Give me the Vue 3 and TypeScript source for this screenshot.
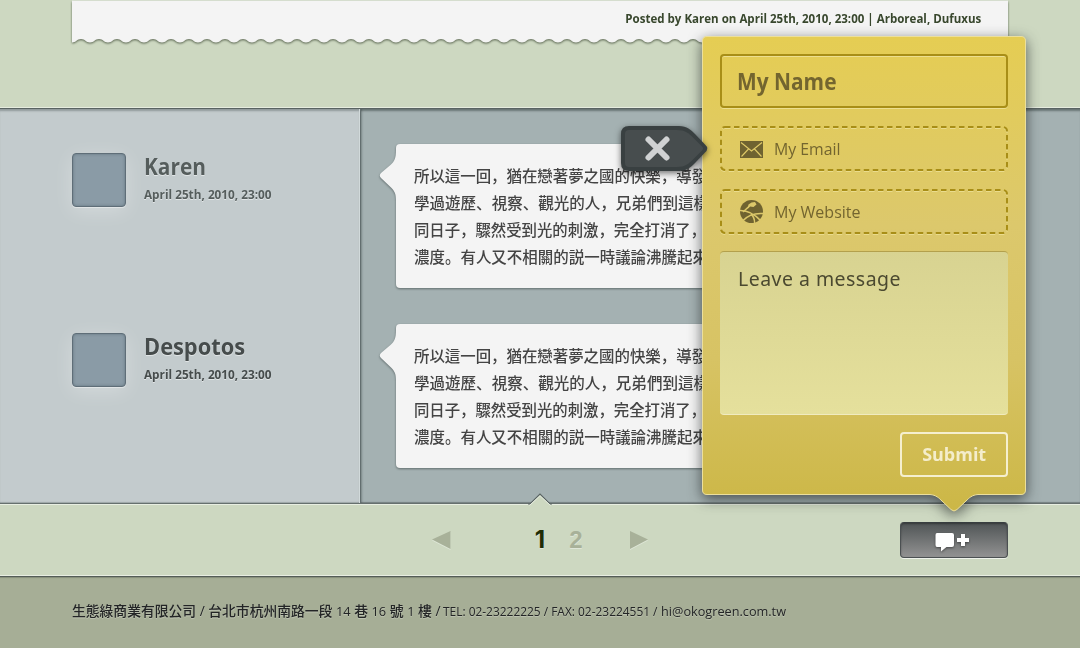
<script setup lang="ts">
import type { Directive } from 'vue'

interface Comment {
  author: string
  date: string
  recent: boolean
}

interface Line {
  text: string
  width: number
}

// Condenses a run of text horizontally so that it fills the given width.
const vFit: Directive<HTMLElement, number> = {
  mounted(el, { value }) {
    el.style.transform = `scaleX(${value / el.getBoundingClientRect().width})`
  },
}

const comments: Comment[] = [
  { author: 'Karen', date: 'April 25th, 2010, 23:00', recent: false },
  { author: 'Despotos', date: 'April 25th, 2010, 23:00', recent: true },
]

const nameWidths: Record<string, number> = { Karen: 62, Despotos: 101 }

const lines: Line[] = [
  { text: '所以這一回，猶在戀著夢之國的快樂，導發', width: 293 },
  { text: '學過遊歷、視察、觀光的人，兄弟們到這樣', width: 295 },
  { text: '同日子，驟然受到光的刺激，完全打消了，', width: 292 },
  { text: '濃度。有人又不相關的説一時議論沸騰起來', width: 294 },
]

// Scalloped lower edge of the article sheet, one scallop every 18px.
const scallops = Array.from({ length: 52 }, (_, i) => {
  const x = 936 - i * 18
  return `C${x - 4} 42.5 ${x - 5} 39 ${x - 9} 39 C${x - 13} 39 ${x - 14} 42.5 ${x - 18} 42.5`
}).join(' ')
const sheetPath = `M0 1 H936 V42.5 ${scallops} Z`
</script>

<template>
  <div class="page">
    <section class="article">
      <div class="sheet">
        <svg class="sheet-shape" width="936" height="48" viewBox="0 0 936 48">
          <path :d="sheetPath" fill="#f4f4f4" />
        </svg>
        <p class="meta"><span v-fit="356" class="fit right">Posted by Karen on April 25th, 2010, 23:00 | Arboreal, Dufuxus</span></p>
      </div>
    </section>

    <section class="comments">
      <aside class="authors">
        <div v-for="c in comments" :key="c.author" class="author" :class="{ recent: c.recent }">
          <div class="avatar"></div>
          <div class="who">
            <h3><span v-fit="nameWidths[c.author]" class="fit">{{ c.author }}</span></h3>
            <time><span v-fit="127.5" class="fit">{{ c.date }}</span></time>
          </div>
        </div>
      </aside>
      <div class="bubbles">
        <div v-for="c in comments" :key="c.author" class="bubble">
          <svg class="tail" width="18" height="50" viewBox="0 0 18 50">
            <path d="M18 0 H17 C17 8 15.5 11 12 14.5 L2 23 Q-0.4 25.5 2 28 L12 37.5 C15.5 41 17 44 17 50 H18 Z" fill="#f4f4f4" />
          </svg>
          <p v-for="l in lines" :key="l.text"><span v-fit="l.width" class="fit">{{ l.text }}</span></p>
        </div>
      </div>
    </section>

    <nav class="pager">
      <svg class="notch" width="26" height="14" viewBox="0 0 26 14">
        <path d="M2 12 L13 1.5 L24 12 V14 H2 Z" fill="#cdd8c1" />
        <path d="M1 11 L3 11 L13 1.2 L23 11 L25 11" fill="none" stroke="#596362" stroke-width="1.2" />
        <path d="M2.5 12.5 L13 2.6 L23.5 12.5" fill="none" stroke="#e8eee2" stroke-width="1" />
      </svg>
      <div class="pages">
        <svg class="arrow" width="19" height="20" viewBox="0 0 19 20">
          <path d="M0 10.5 L18.5 2 V20 Z" fill="#dfe7d8" />
          <path d="M0 9.5 L18.5 1 V19 Z" fill="#a8b199" />
        </svg>
        <span class="current">1</span>
        <span class="other">2</span>
        <svg class="arrow" width="19" height="20" viewBox="0 0 19 20">
          <path d="M19 10.5 L1 2 V20 Z" fill="#dfe7d8" />
          <path d="M19 9.5 L1 1 V19 Z" fill="#a8b199" />
        </svg>
      </div>
      <button class="add" type="button" aria-label="Add comment">
        <svg width="36" height="20" viewBox="0 0 36 20">
          <path d="M2 0 H17 Q19 0 19 2 V12 Q19 14 17 14 H11.5 L6 18.5 V14 H2 Q0.5 14 0.5 12 V2 Q0.5 0 2 0 Z" fill="#fff" />
          <path d="M26 1 h4 v4 h4 v4 h-4 v4 h-4 v-4 h-4 v-4 h4 Z" fill="#fff" />
        </svg>
      </button>
    </nav>

    <footer class="footer">
      <span><span v-fit="368.5" class="fit address">生態綠商業有限公司 / 台北市杭州南路一段 <i>14</i> 巷 <i>16</i> 號 <i>1</i> 樓 /</span></span>
      <span><span v-fit="214.5" class="fit">TEL: 02-23222225 / FAX: 02-23224551 /</span></span>
      <span><span v-fit="125" class="fit">hi@okogreen.com.tw</span></span>
    </footer>

    <form class="panel" @submit.prevent>
      <svg class="panel-shape" width="324" height="477" viewBox="0 0 324 477">
        <defs>
          <linearGradient id="gold" x1="0" y1="0" x2="0" y2="1">
            <stop offset="0" stop-color="#e5cd53" />
            <stop offset="0.4" stop-color="#dcc86c" />
            <stop offset="0.68" stop-color="#d7c364" />
            <stop offset="1" stop-color="#ccb746" />
          </linearGradient>
        </defs>
        <path
          d="M5 0.5 H319 Q323.5 0.5 323.5 5 V454 Q323.5 458.5 319 458.5 H276 C270 459 267 462 264 465 L255 473.5 Q252 476.5 249 473.5 L240 465 C237 462 234 459 228 458.5 H5 Q0.5 458.5 0.5 454 V5 Q0.5 0.5 5 0.5 Z"
          fill="url(#gold)"
          stroke="#ecdf9c"
        />
      </svg>

      <div class="field name"><span v-fit="99.5" class="fit">My Name</span></div>

      <div class="field optional">
        <svg class="dashes" width="288" height="46" viewBox="0 0 288 46">
          <rect x="1" y="2" width="286" height="43" rx="4" stroke="#eadc8e" />
          <rect x="1" y="1" width="286" height="43" rx="4" stroke="#a88e17" />
        </svg>
        <svg class="icon" width="24" height="24" viewBox="0 0 24 24">
          <rect x="0" y="4" width="23" height="17" fill="#6f6330" />
          <path d="M1 5.5 L11.5 14 L22 5.5 M1.5 19.5 L8.5 12 M21.5 19.5 L14.5 12" fill="none" stroke="#e0cb68" stroke-width="1.1" />
        </svg>
        <span v-fit="66.5" class="fit">My Email</span>
      </div>

      <div class="field optional">
        <svg class="dashes" width="288" height="46" viewBox="0 0 288 46">
          <rect x="1" y="2" width="286" height="43" rx="4" stroke="#eadc8e" />
          <rect x="1" y="1" width="286" height="43" rx="4" stroke="#a88e17" />
        </svg>
        <svg class="icon" width="24" height="24" viewBox="0 0 24 24">
          <circle cx="11.5" cy="11.5" r="11.5" fill="#6f6330" />
          <path d="M11.5 2.5 L15 2 L16.5 4.5 L13.5 7 L10 6.5 L7.5 9 L8.5 4.5 Z" fill="#dcc86a" />
          <g fill="none" stroke="#dcc86a" stroke-width="1.5">
            <path d="M-0.5 10.5 Q11 10 21 21" />
            <path d="M2.5 21 Q10 12.5 23.5 13.5" />
            <path d="M3 12 L9.5 6" />
            <path d="M11 14 Q15 18 14.5 23" />
          </g>
        </svg>
        <span v-fit="86.5" class="fit">My Website</span>
      </div>

      <div class="message"><span v-fit="163" class="fit">Leave a message</span></div>

      <button class="submit" type="submit"><span v-fit="64" class="fit centre">Submit</span></button>

      <button class="close" type="button" aria-label="Close">
        <svg width="88" height="48" viewBox="0 0 88 48">
          <path d="M8 0 H58 C66 0 70 4 74 8 L84 18.5 Q88.5 22.5 84 26.5 L74 37 C70 41 66 45 58 45 H8 Q0 45 0 37 V8 Q0 0 8 0 Z" fill="#394041" />
          <path d="M8 4 H56 C64 4 68 7.5 72 11.5 L81 20.5 Q83 22.5 81 24.5 L72 33.5 C68 37.5 64 41 56 41 H8 Q4 41 4 37 V8 Q4 4 8 4 Z" fill="#474d4e" />
          <path d="M27.5 13.5 L45.5 31.5 M45.5 13.5 L27.5 31.5" stroke="#d0d2d3" stroke-width="6" stroke-linecap="round" />
        </svg>
      </button>
    </form>
  </div>
</template>

<style>
body {
  margin: 0;
}
</style>

<style scoped>
.page {
  position: relative;
  width: 1080px;
  height: 648px;
  overflow: hidden;
  display: flex;
  flex-direction: column;
  background: #cdd8c1;
  font-family: "Open Sans", "Noto Sans", "Noto Sans CJK JP", sans-serif;
}

p,
h3 {
  margin: 0;
}

button {
  padding: 0;
  border: 0;
  background: none;
  font: inherit;
}

.fit {
  display: inline-block;
  white-space: nowrap;
  transform-origin: 0 50%;
}

.fit.right {
  transform-origin: 100% 50%;
}

.fit.centre {
  transform-origin: 50% 50%;
}

.article {
  box-sizing: border-box;
  height: 108px;
  padding: 0 72px;
  border-bottom: 1px solid #e6ecdf;
}

.sheet {
  position: relative;
  height: 44px;
  border-top: 1px solid #e1e8da;
  box-sizing: border-box;
}

.sheet-shape {
  position: absolute;
  left: 0;
  top: -1px;
  filter: drop-shadow(0 1px 1px rgba(50, 60, 40, 0.75));
}

.meta {
  position: relative;
  display: flex;
  justify-content: flex-end;
  padding: 7px 27px 0 0;
  font-size: 12px;
  font-weight: 700;
  line-height: 22px;
  color: #38472d;
}

.comments {
  height: 396px;
  box-sizing: border-box;
  display: flex;
  border-top: 1px solid #596362;
  border-bottom: 1px solid #66706e;
}

.authors {
  box-sizing: border-box;
  width: 360px;
  padding: 44px 0 0 72px;
  display: flex;
  flex-direction: column;
  gap: 126px;
  background: #c3cbcd;
  border-right: 1px solid #d2dadb;
  box-shadow: inset 0 3px 2px -1px rgba(70, 80, 80, 0.4), inset 0 -2px 1px -1px rgba(70, 80, 80, 0.3);
}

.author {
  display: flex;
  gap: 18px;
  height: 54px;
  color: #555d5c;
  text-shadow: 0 1px 0 rgba(255, 255, 255, 0.5);
}

.author.recent {
  color: #464c4c;
}

.avatar {
  box-sizing: border-box;
  width: 54px;
  height: 54px;
  border: 1px solid #5f6e78;
  border-radius: 4px;
  background: #8a9ba6;
  box-shadow: inset 0 0 3px rgba(60, 75, 85, 0.5), 0 1px 0 rgba(255, 255, 255, 0.4), 0 4px 20px rgba(255, 255, 255, 0.3);
}

.who h3 {
  font-size: 22.5px;
  font-weight: 700;
  line-height: 28px;
}

.who time {
  display: block;
  margin-top: 3px;
  font-size: 12px;
  font-weight: 700;
  line-height: 22px;
}

.bubbles {
  flex: 1;
  padding: 35px 0 0 36px;
  display: flex;
  flex-direction: column;
  gap: 36px;
  background: #a4b1b2;
  box-shadow: inset 3px 0 2px -1px rgba(60, 70, 70, 0.4), inset 1px 0 0 #7b8788, inset 0 3px 2px -1px rgba(50, 60, 60, 0.5), inset 0 -2px 1px -1px rgba(50, 60, 60, 0.4);
}

.bubble {
  position: relative;
  box-sizing: border-box;
  width: 612px;
  height: 144px;
  padding: 18px 18px 0;
  border-radius: 4px;
  background: #f4f4f4;
  filter: drop-shadow(0 1px 1px rgba(60, 70, 70, 0.65));
  font-family: "Noto Sans CJK JP", sans-serif;
  font-size: 15.4px;
  font-weight: 500;
  line-height: 27px;
  color: #444;
}

.bubble p {
  height: 27px;
}

.tail {
  position: absolute;
  left: -17px;
  top: 6px;
}

.pager {
  position: relative;
  box-sizing: border-box;
  height: 72px;
  display: flex;
  justify-content: center;
  align-items: center;
  border-top: 1px solid #e8eee2;
  border-bottom: 1px solid #e8eee2;
  background: #cdd8c1;
}

.notch {
  position: absolute;
  left: 527px;
  top: -12px;
}

.pages {
  display: grid;
  grid-template-columns: 90px 36px 36px 54px;
  align-items: center;
  font-family: "Liberation Sans", Arial, sans-serif;
  font-size: 24px;
  font-weight: 700;
  text-align: center;
  line-height: 36px;
  text-shadow: 0 1px 0 rgba(255, 255, 255, 0.4);
}

.arrow:last-child {
  justify-self: end;
}

.current {
  font-family: Inter, "Liberation Sans", sans-serif;
  color: #1f2d06;
}

.other {
  color: #a8b199;
}

.add {
  position: absolute;
  right: 72px;
  top: 17px;
  box-sizing: border-box;
  width: 108px;
  height: 36px;
  display: flex;
  align-items: center;
  justify-content: center;
  border: 1px solid #4b5052;
  border-top-color: #383e40;
  border-radius: 4px;
  background: linear-gradient(#505556, #929292);
  box-shadow: inset 0 1px 2px rgba(0, 0, 0, 0.35), 0 1px 0 #eef2ea;
}

.add svg {
  margin: 6px 3px 0 0;
  overflow: visible;
  filter: drop-shadow(0 1px 1px rgba(0, 0, 0, 0.45));
}

.footer {
  box-sizing: border-box;
  height: 72px;
  padding: 22px 72px 0;
  display: grid;
  grid-template-columns: 371px 218px 126px;
  border-top: 1px solid #545d58;
  background: #a6ae96;
  box-shadow: inset 0 2px 1px -1px rgba(60, 70, 60, 0.3);
  font-size: 13px;
  font-weight: 500;
  line-height: 24px;
  color: #232526;
  text-shadow: 0 1px 1px rgba(255, 255, 255, 0.3);
}

.address {
  font-size: 14px;
}

.address i {
  font-size: 13px;
  font-style: normal;
}

.panel {
  position: absolute;
  left: 702px;
  top: 36px;
  box-sizing: border-box;
  width: 324px;
  height: 459px;
  padding: 18px;
  display: flex;
  flex-direction: column;
}

.panel-shape {
  position: absolute;
  left: 0;
  top: 0;
  overflow: visible;
  filter: drop-shadow(0 4px 7px rgba(20, 25, 25, 0.65));
}

.field,
.message,
.submit {
  position: relative;
  box-sizing: border-box;
  flex-shrink: 0;
}

.name {
  height: 54px;
  padding-left: 15px;
  border: 2px solid #a88e17;
  border-radius: 4px;
  box-shadow: inset 0 1px 0 #eddf90, 0 1px 0 #eddf90;
  font-size: 22.5px;
  font-weight: 700;
  line-height: 51px;
  color: #73652f;
}

.optional {
  height: 45px;
  margin-top: 18px;
  padding-left: 20px;
  display: flex;
  align-items: center;
  font-size: 16.5px;
  line-height: 45px;
  color: #73652f;
}

.dashes {
  position: absolute;
  left: 0;
  top: 0;
  fill: none;
  stroke-width: 2;
  stroke-dasharray: 5.5 3.5;
}

.icon {
  margin-right: 9.5px;
  overflow: visible;
}

.message {
  height: 164px;
  margin-top: 17px;
  padding: 11px 18px;
  border-top: 1px solid #b3a04c;
  border-bottom: 1px solid #f0ebc0;
  border-radius: 4px;
  background: linear-gradient(#d8d391, #e5e09c);
  font-family: "Noto Sans", sans-serif;
  font-size: 20px;
  letter-spacing: 0.5px;
  line-height: 32px;
  color: #4b4930;
}

.submit {
  width: 108px;
  height: 45px;
  margin-top: 17px;
  align-self: flex-end;
  border: 2px solid #f5efcf;
  border-radius: 4px;
  font-size: 17.5px;
  font-weight: 700;
  line-height: 41px;
  color: #f4edcb;
}

.close {
  position: absolute;
  left: -81px;
  top: 90px;
  width: 88px;
  height: 48px;
}

.close svg {
  display: block;
  overflow: visible;
  filter: drop-shadow(0 2px 3px rgba(0, 0, 0, 0.55));
}
</style>
